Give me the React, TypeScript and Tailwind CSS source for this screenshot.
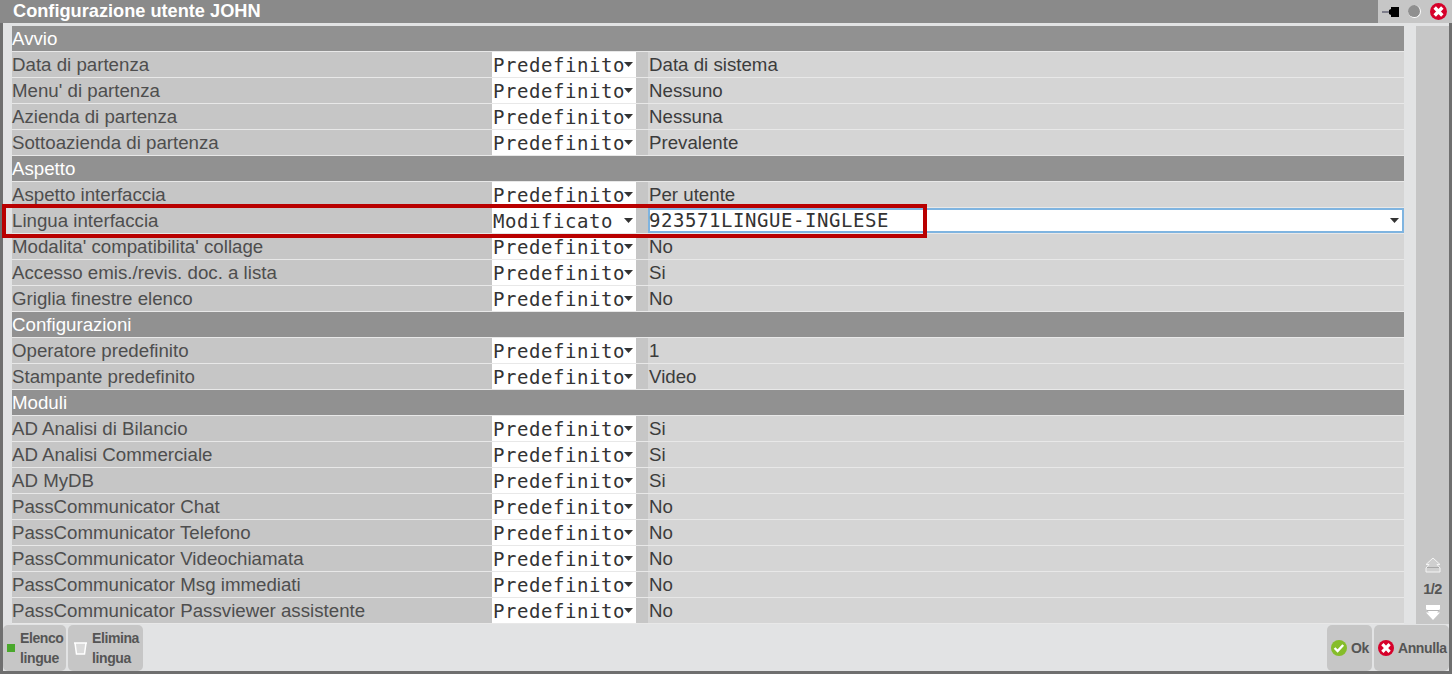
const sans = "font-['Liberation_Sans',Arial,sans-serif]";
const mono = "font-['DejaVu_Sans_Mono','Liberation_Mono',monospace]";

type Row = { label: string; value?: string; section?: boolean; edited?: boolean };

const rows: Row[] = [
  { label: "Avvio", section: true },
  { label: "Data di partenza", value: "Data di sistema" },
  { label: "Menu' di partenza", value: "Nessuno" },
  { label: "Azienda di partenza", value: "Nessuna" },
  { label: "Sottoazienda di partenza", value: "Prevalente" },
  { label: "Aspetto", section: true },
  { label: "Aspetto interfaccia", value: "Per utente" },
  { label: "Lingua interfaccia", value: "923571LINGUE-INGLESE", edited: true },
  { label: "Modalita' compatibilita' collage", value: "No" },
  { label: "Accesso emis./revis. doc. a lista", value: "Si" },
  { label: "Griglia finestre elenco", value: "No" },
  { label: "Configurazioni", section: true },
  { label: "Operatore predefinito", value: "1" },
  { label: "Stampante predefinito", value: "Video" },
  { label: "Moduli", section: true },
  { label: "AD Analisi di Bilancio", value: "Si" },
  { label: "AD Analisi Commerciale", value: "Si" },
  { label: "AD MyDB", value: "Si" },
  { label: "PassCommunicator Chat", value: "No" },
  { label: "PassCommunicator Telefono", value: "No" },
  { label: "PassCommunicator Videochiamata", value: "No" },
  { label: "PassCommunicator Msg immediati", value: "No" },
  { label: "PassCommunicator Passviewer assistente", value: "No" },
];

const Caret = () => (
  <svg width="9" height="5" viewBox="0 0 9 5" className="shrink-0">
    <path d="M0 0h9L4.5 5z" fill="#333" />
  </svg>
);

const SettingRow = ({ row }: { row: Row }) => {
  if (row.section) {
    return (
      <div className="h-[26px] border-b border-[#e8e8e8] bg-[#919191] text-[18.7px] leading-[25px] text-white">
        {row.label}
      </div>
    );
  }
  return (
    <div className="flex h-[26px] border-b border-[#e8e8e8] bg-[#c6c6c6] text-[18.7px] leading-[25px] text-[#4e4e4e]">
      <div className="w-[480px] whitespace-nowrap">{row.label}</div>
      <div className={`${mono} flex h-[25px] w-[144px] items-center bg-white pl-px text-[19px] tracking-[0.56px] text-[#333]`}>
        <span className="w-[132px] whitespace-pre pt-[1px] leading-[24px]">{row.edited ? "Modificato" : "Predefinito"}</span>
        <span className="ml-[-1px]"><Caret /></span>
      </div>
      <div className="w-[12px]" />
      {row.edited ? (
        <div className="flex h-[25px] flex-1 items-center justify-between border-2 border-[#7fb4e0] bg-white pr-[3px]">
          <span className={`${mono} ml-[-1px] text-[19px] leading-[21px] tracking-[0.56px] text-[#333]`}>{row.value}</span>
          <Caret />
        </div>
      ) : (
        <div className="flex-1 bg-[#d5d5d5] pl-px text-[#3c3c3c]">{row.value}</div>
      )}
    </div>
  );
};

const PinIcon = () => (
  <svg width="17" height="12" viewBox="0 0 17 12">
    <path d="M0 6h8" stroke="#667" strokeWidth="1.5" />
    <path d="M7 4l2-1V1h8v10H9V9L7 8z" fill="#000" />
  </svg>
);

const CloseIcon = ({ size }: { size: number }) => (
  <svg width={size} height={size} viewBox="0 0 16 16" className="shrink-0">
    <circle cx="8" cy="8" r="8" fill="#d6002a" />
    <path d="M4.4 4.2l7.2 7.6M11.6 4.2l-7.2 7.6" stroke="#fff" strokeWidth="3.2" />
  </svg>
);

const OkIcon = () => (
  <svg width="16" height="16" viewBox="0 0 16 16" className="shrink-0">
    <circle cx="8" cy="8" r="8" fill="#86bd2a" />
    <path d="M3.6 8l3 3 5.6-6" stroke="#fff" strokeWidth="2.4" fill="none" />
  </svg>
);

const ArrowUp = () => (
  <svg width="16" height="16" viewBox="0 0 16 16">
    <path d="M8 1L15 7.5H12L15 11V15H1V11L4 7.5H1z" fill="#cfcfcf" stroke="#f4f4f4" strokeWidth="1" />
    <path d="M2 10.5H14" stroke="#a8a8a8" strokeWidth="1" />
  </svg>
);

const ArrowDown = () => (
  <svg width="16" height="16" viewBox="0 0 16 16">
    <path d="M1 0H15V4L12 7.5H15L8 15L1 7.5H4L1 4z" fill="#fff" />
    <path d="M2 5.5H14" stroke="#b4b4b4" strokeWidth="1" />
  </svg>
);

const FooterButton = ({ className, children }: { className: string; children: React.ReactNode }) => (
  <div className={`flex h-[46px] items-center rounded-[5px] bg-[#c6c6c6] text-[14px] font-bold tracking-[-0.4px] text-[#555] ${className}`}>
    {children}
  </div>
);

export default function App() {
  return (
    <div className={`${sans} relative flex h-[674px] w-[1452px] flex-col border-x-[3px] border-b-[3px] border-[#6f6f6f] bg-[#e2e3e4]`}>
      {/* Title bar */}
      <div className="-mx-[3px] flex h-[23px] shrink-0 justify-between bg-[#8a8a8a]">
        <div className="pl-[13px] text-[18.2px] font-bold leading-[23px] text-white">Configurazione utente JOHN</div>
        <div className="flex w-[74px] items-center gap-[9px] bg-[#c6c6c6] pl-[4px]">
          <PinIcon />
          <div className="h-[13px] w-[13px] rounded-full border-b border-r border-white bg-[#8f8f8f]" />
          <CloseIcon size={17} />
        </div>
      </div>

      {/* Settings list */}
      <div className="flex h-[601px] shrink-0 pt-[3px]">
        <div className="ml-[9px] w-[1392px]">
          {rows.map((row) => (
            <SettingRow key={row.label} row={row} />
          ))}
        </div>
        <div className="ml-[12px] flex w-[33px] flex-col items-center justify-end bg-[#c6c6c6] pb-[3px]">
          <ArrowUp />
          <div className="mb-[8px] mt-[8px] text-[14.5px] font-bold leading-[16px] tracking-[-0.5px] text-[#555]">1/2</div>
          <ArrowDown />
        </div>
      </div>

      {/* Footer */}
      <div className="flex flex-1 items-end justify-between">
        <div className="flex gap-[2px]">
          <FooterButton className="w-[63px] pl-[4px]">
            <span className="h-[8px] w-[8px] shrink-0 bg-[#4aa82c]" />
            <span className="ml-[5px] leading-[20px]">Elenco<br />lingue</span>
          </FooterButton>
          <FooterButton className="w-[75px] pl-[5px]">
            <svg width="15" height="15" viewBox="0 0 15 15" className="shrink-0">
              <path d="M1 2h13M2 2l1.5 11h8L13 2z" fill="#dadada" stroke="#fff" strokeWidth="1.5" />
            </svg>
            <span className="ml-[4px] leading-[20px]">Elimina<br />lingua</span>
          </FooterButton>
        </div>
        <div className="flex gap-[2px]">
          <FooterButton className="w-[45px] gap-[4px] pl-[4px]">
            <OkIcon />
            Ok
          </FooterButton>
          <FooterButton className="w-[75px] gap-[4px] pl-[4px]">
            <CloseIcon size={16} />
            Annulla
          </FooterButton>
        </div>
      </div>

      {/* Red annotation over the edited row */}
      <div className="absolute left-[-1px] top-[204px] h-[34px] w-[925px] border-4 border-[#b90000]" />
    </div>
  );
}
